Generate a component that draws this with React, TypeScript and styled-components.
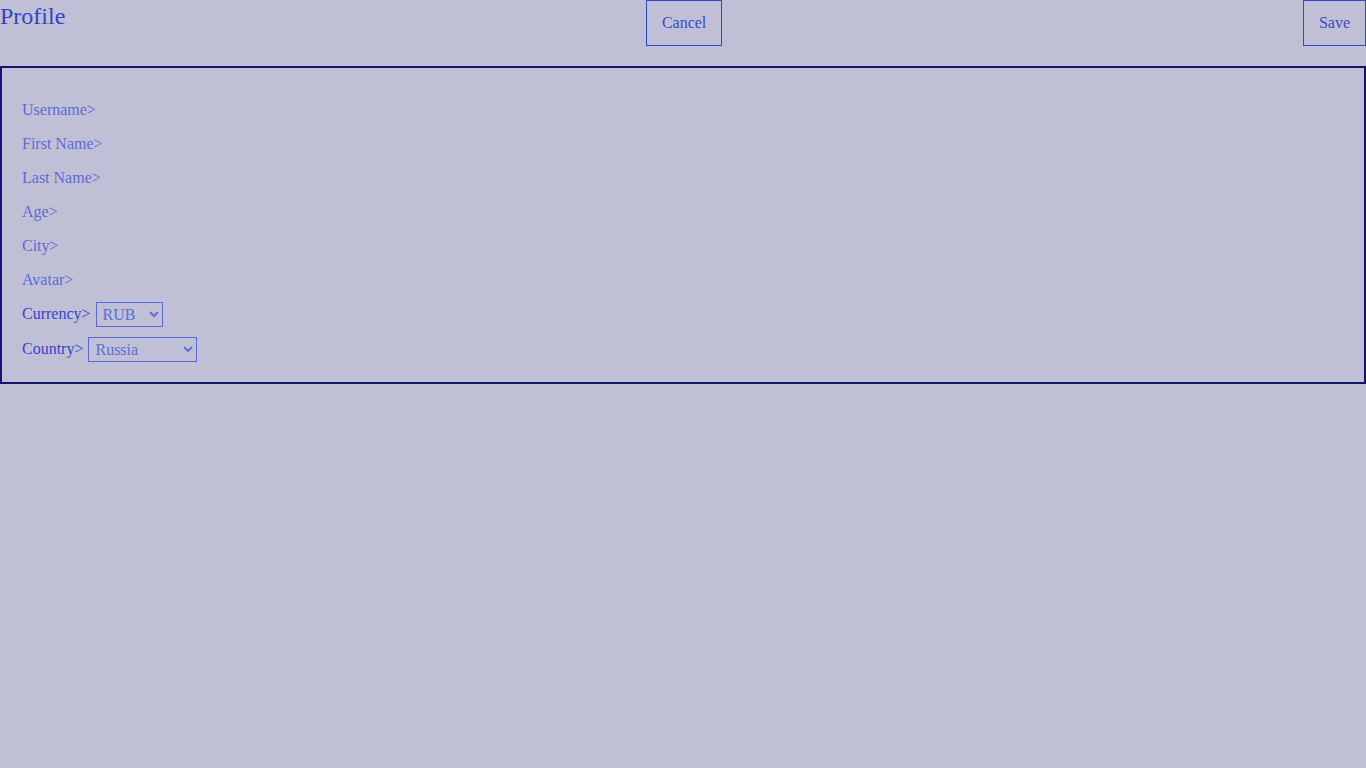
import React, { FC } from 'react';
import styled, { createGlobalStyle } from 'styled-components';

const GlobalStyle = createGlobalStyle`
  html, body {
    margin: 0;
    padding: 0;
    background: #bfc0d6;
    font-family: 'Liberation Serif', 'Times New Roman', serif;
  }
`;

const Page = styled.div`
  min-height: 768px;
  background: #bfc0d6;
`;
const Header = styled.div`
  display: flex;
  justify-content: space-between;
  align-items: flex-start;
  height: 46px;
  margin-bottom: 20px;
`;
const Title = styled.h1`
  margin: 0;
  font-size: 24px;
  font-weight: normal;
  line-height: 32px;
  color: #3344c4;
`;
const Button = styled.button`
  height: 46px;
  padding: 0 15px;
  border: 1px solid #3446c8;
  background: transparent;
  color: #3a4acc;
  font-family: inherit;
  font-size: 16px;
  cursor: pointer;
`;
const Card = styled.div`
  border: 2px solid #14146a;
  padding: 30px 20px 20px;
  display: flex;
  flex-direction: column;
  gap: 10px;
`;
const Row = styled.div`
  display: flex;
  align-items: center;
  min-height: 24px;
`;
const Label = styled.span<{ $active?: boolean }>`
  font-size: 16px;
  line-height: 22px;
  color: ${(p) => (p.$active ? '#3445c8' : '#5c6bd4')};
  margin-right: 5px;
  margin-bottom: ${(p) => (p.$active ? '2px' : '0')};
`;
const Field = styled.input`
  border: none;
  background: transparent;
  outline: none;
  font-family: inherit;
  font-size: 16px;
  color: #5c6bd4;
  padding: 0;
  width: 200px;
`;
const Select = styled.select<{ $width: number }>`
  width: ${(p) => p.$width}px;
  height: 25px;
  padding: 0 2px;
  border: 1px solid #5a6ad6;
  border-radius: 0;
  background: transparent;
  color: #5f6ed0;
  font-family: inherit;
  font-size: 16px;
`;

const fields = ['Username', 'First Name', 'Last Name', 'Age', 'City', 'Avatar'];

const App: FC = () => {
  return (
    <Page>
      <GlobalStyle />
      <Header>
        <Title>Profile</Title>
        <Button>Cancel</Button>
        <Button>Save</Button>
      </Header>
      <Card>
        {fields.map((f) => (
          <Row key={f}>
            <Label>{f}&gt;</Label>
            <Field readOnly />
          </Row>
        ))}
        <Row>
          <Label $active>Currency&gt;</Label>
          <Select $width={67} defaultValue="RUB">
            <option value="RUB">RUB</option>
            <option value="EUR">EUR</option>
            <option value="USD">USD</option>
          </Select>
        </Row>
        <Row>
          <Label $active>Country&gt;</Label>
          <Select $width={109} defaultValue="Russia">
            <option value="Armenia">Armenia</option>
            <option value="Russia">Russia</option>
            <option value="Belarus">Belarus</option>
            <option value="Kazakhstan">Kazakhstan</option>
            <option value="Ukraine">Ukraine</option>
          </Select>
        </Row>
      </Card>
    </Page>
  );
};

export default App;
